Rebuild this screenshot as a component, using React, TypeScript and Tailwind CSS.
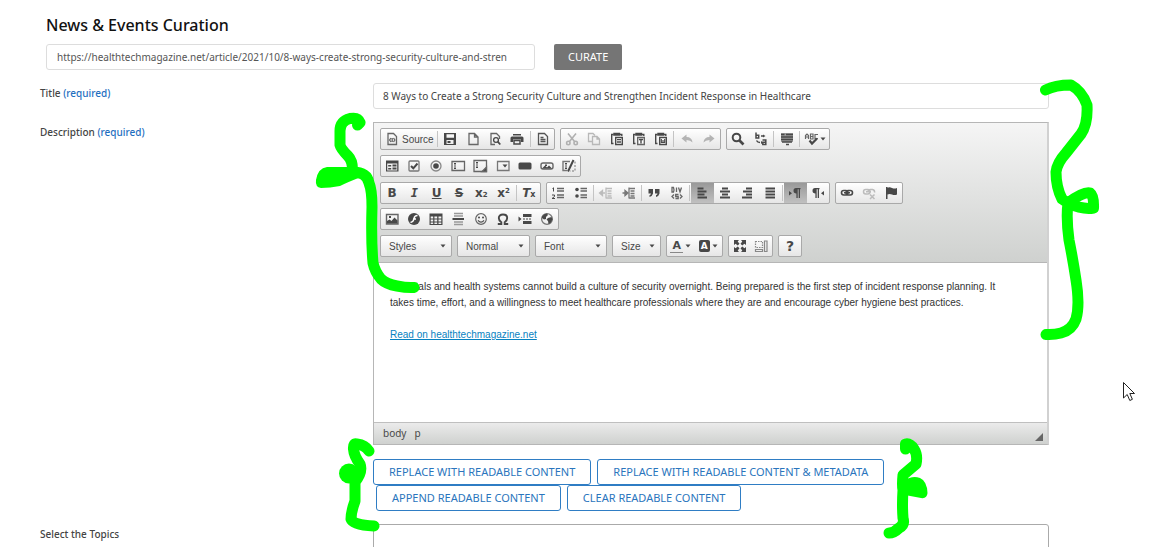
import type { ReactNode } from "react";

const D = "#484848";

const icons: Record<string, ReactNode> = {
  source: (
    <g fill="none" stroke="#666" strokeWidth="1.3">
      <path d="M4 2.5h5.5l3 3v8H4z" />
      <path d="M7 7L5.6 9 7 11M9.5 7l1.4 2-1.4 2M8.2 7v4" />
    </g>
  ),
  save: <path fillRule="evenodd" d="M2 2h12v12H2zM4.500 3.200v3.500h7.500V3.200zM4.500 9v4h7V9zM5.500 10h3v2h-3z" />,
  page: <path d="M4 2.500h5.500l3.500 3.500v7.500H4zM9.500 2.500v3.500H13" fill="none" stroke="#666" strokeWidth="1.300" />,
  preview: (
    <g fill="none" stroke="#666" strokeWidth="1.300">
      <path d="M12.500 8V5.500l-3-3H4v11h4" />
      <circle cx="9" cy="9" r="2.400" stroke={D} />
      <path d="M10.700 10.700l2.600 2.800" stroke={D} strokeWidth="1.800" />
    </g>
  ),
  print: (
    <>
      <path d="M4 3h8v1.500H4zM3 5.500h10q1.500 0 1.500 1.500v4H12V8.500H4V11H1.500V7Q1.500 5.500 3 5.500z" />
      <path d="M5 9.500h6V13H5z" fill="none" stroke={D} strokeWidth="1.500" />
    </>
  ),
  template: (
    <g fill="none" stroke="#555" strokeWidth="1.300">
      <path d="M3.500 2.500H9.500l3 3v8h-9z" />
      <path d="M5.500 6.500h3M5.500 8.500h5M5.500 10.500h5" />
    </g>
  ),
  cut: (
    <g fill="none" stroke="#b0b0b0" strokeWidth="1.600">
      <path d="M4 2.500l6.500 8M12 2.500l-6.500 8" />
      <circle cx="4.300" cy="12" r="1.700" />
      <circle cx="11.700" cy="12" r="1.700" />
    </g>
  ),
  copy: (
    <g fill="none" stroke="#b8b8b8" strokeWidth="1.300">
      <path d="M6.500 10.500h-4v-8H7l2 2" />
      <path d="M6.500 5.500h4.500l2.500 2.500v5.500h-7zM11 5.500v2.500h2.500" />
    </g>
  ),
  paste: (
    <g fill="none" stroke={D} strokeWidth="1.400">
      <path d="M4.500 12.500H2.700v-9h2M11 3.500h1.800V5" />
      <path d="M5 2.500h5.500v1.500H5z" fill={D} />
      <path d="M6.700 6.500h6.600v7H6.700z" fill="#fff" />
      <path d="M8 8.700h4M8 11h4" strokeWidth="1.300" />
    </g>
  ),
  pasteText: (
    <g fill="none" stroke={D} strokeWidth="1.400">
      <path d="M4.500 12.500H2.700v-9h2M11 3.500h1.800V5" />
      <path d="M5 2.500h5.500v1.500H5z" fill={D} />
      <path d="M6.700 6.500h6.600v7H6.700z" fill="#fff" stroke="#666" />
      <path d="M8 8.500h4M10 8.500v4" />
    </g>
  ),
  pasteWord: (
    <g fill="none" stroke={D} strokeWidth="1.400">
      <path d="M4.500 12.500H2.700v-9h2M11 3.500h1.800V5" />
      <path d="M5 2.500h5.500v1.500H5z" fill={D} />
      <path d="M6.700 6.500h6.600v7H6.700z" fill="#fff" />
      <path d="M8.300 8v3.500h3.400V8M10 9v2" strokeWidth="1.200" />
    </g>
  ),
  undo: <path d="M2.500 7.500L7.500 3.500V6q5.500 0 6 5.500Q11.500 9 7.500 9v2.500z" fill="#b4b4b4" />,
  redo: <path d="M13.500 7.500L8.500 3.500V6q-5.500 0-6 5.500Q4.500 9 8.500 9v2.500z" fill="#b4b4b4" />,
  find: (
    <g fill="none" stroke={D}>
      <circle cx="6.500" cy="6.500" r="3.800" strokeWidth="2" />
      <path d="M9.500 9.500l4 4" strokeWidth="2.600" />
    </g>
  ),
  replace: (
    <g fill="none" stroke={D} strokeWidth="1.500">
      <path d="M3 1.500v5.500h2.700V4.200H3M9.500 9h3.300v4.500H9.800v-2.200h3M3.500 9.500q1 2 3.500 2M8 5h3" />
      <path d="M8 9.700v3.600l1.500-1.800zM10 3.500v3l2.500-1.500z" fill={D} stroke="none" />
    </g>
  ),
  selectAll: (
    <g>
      <path d="M2 2h12v9H2z" fill="#999" />
      <path d="M2 3.500h3.500M7 3.500h7M2 6h12M2 8.500h12M3 11h10M7 13.500h3" stroke={D} strokeWidth="1.400" />
    </g>
  ),
  form: <path fillRule="evenodd" d="M2 2.500h12.500v11H2zM3.200 5.500v7h10v-7zM4.200 7h3v1.500h-3zM8.500 6.500h4v2h-4zM4.200 10h3v1.500h-3zM8.500 9.500h4v2h-4z" />,
  checkbox: (
    <g fill="none">
      <rect x="3" y="3" width="10" height="10" rx="1" stroke="#777" strokeWidth="1.300" />
      <path d="M5 8l2.300 2.300L11.500 5.500" stroke={D} strokeWidth="2" />
    </g>
  ),
  radio: (
    <g>
      <circle cx="8" cy="8" r="5" fill="none" stroke="#888" strokeWidth="1.300" />
      <circle cx="8" cy="8" r="2.800" />
    </g>
  ),
  textfield: (
    <g fill="none" stroke="#666" strokeWidth="1.300">
      <path d="M2 3.500h12.500v9H2z" />
      <path d="M4 5.500h2M5 5.500v5M4 10.500h2" stroke={D} strokeWidth="1" />
    </g>
  ),
  textarea: (
    <g fill="none" stroke="#666" strokeWidth="1.300">
      <path d="M2 2.500h12.500v11H2z" />
      <path d="M4 4.500h2M5 4.500v5M4 9.500h2" stroke={D} strokeWidth="1" />
      <path d="M14.500 9v4.500H10z" fill={D} />
    </g>
  ),
  selectField: (
    <g>
      <path d="M2.500 3.500h11.500v9H2.500z" fill="none" stroke="#777" strokeWidth="1.300" />
      <path d="M7.500 6.500h5l-2.500 3z" />
    </g>
  ),
  button: <rect x="1.500" y="4.500" width="13" height="7" rx="1.500" />,
  imageButton: (
    <g>
      <rect x="2" y="5" width="12" height="6" rx="2" fill="none" stroke="#666" strokeWidth="1.400" />
      <path d="M3 10.500l3-3 2 2 2-2 3 3zM6 6.500h2V8H6z" />
    </g>
  ),
  hidden: (
    <g fill="none" stroke={D}>
      <path d="M9 3.500H2v9h4" stroke="#777" strokeWidth="1.400" />
      <path d="M4 5.500h2M5 5.500v5M4 10.500h2" strokeWidth="1" />
      <path d="M12.500 2L7 13.500" strokeWidth="2" />
      <path d="M14 3.500v9.500H9" stroke="#777" strokeDasharray="2 1.500" />
    </g>
  ),
  ol: (
    <g stroke={D} fill="none">
      <path d="M3.500 2.500v4M2.500 3.500h1M2 10h2.500v1.500L2 13.500h3" />
      <path d="M7 3.500h7M7 6h7M7 10h7M7 12.500h7" stroke="#666" strokeWidth="1.400" />
    </g>
  ),
  ul: (
    <g>
      <path d="M7.500 3.500H14M7.500 6H14M7.500 10H14M7.500 12.500H14" stroke="#666" strokeWidth="1.400" />
      <circle cx="4" cy="4.500" r="1.800" />
      <circle cx="4" cy="11" r="1.800" />
    </g>
  ),
  outdent: (
    <g stroke="#bcbcbc" fill="#bcbcbc" strokeWidth="1.300">
      <path d="M8 3.500h6M9.500 6h4M9.500 8.500h4M9.500 11h4M8 13h6M8 2.500v11" />
      <path d="M2 8h5M4.500 5.500L1.500 8l3 2.500z" />
    </g>
  ),
  indent: (
    <g stroke="#777" fill="#777" strokeWidth="1.300">
      <path d="M8 3.500h6M9.500 6h4M9.500 8.500h4M9.500 11h4M8 13h6M8 2.500v11" />
      <path d="M1.500 8h4M4 5.500L7 8l-3 2.500z" />
    </g>
  ),
  quote: <path d="M2.500 4h4.500v4.500Q6.500 11 3.500 12v-1.800Q5 9.500 5 8.500H2.500zM9 4h4.500v4.500Q13 11 10 12v-1.800q1.500-.7 1.500-1.700H9z" />,
  div: (
    <g fill="none" stroke="#666" strokeWidth="1.300">
      <path d="M3 2.500v4.500h1.500q1-2.200 0-4.500zM7.500 2.500V7M9.500 2.500L11 7l1.500-4.500M5 9.500l-2 2 2 2M11 9.500l2 2-2 2M9.500 9.500H6.700v2h2.500v2H6.500" />
    </g>
  ),
  left: <path d="M3.500 3.500h6M3.500 6.500h9M3.500 9.500h7M3.500 12.500h9.500" stroke={D} strokeWidth="2" />,
  center: <path d="M5 3.500h6M3 6.500h10M5 9.500h6M3 12.500h10" stroke={D} strokeWidth="2" />,
  right: <path d="M7 3.500h6M4 6.500h9M7 9.500h6M3 12.500h10" stroke={D} strokeWidth="2" />,
  justify: <path d="M3.500 3.500h9.500M3.500 6.500h9.500M3.500 9.500h9.500M3.500 12.500h9.500" stroke={D} strokeWidth="2" />,
  ltr: <path d="M2 6l3 2.200-3 2.200zM9 3h4.500v1.300H13V13h-1.300V4.300h-1V13H9.400V8.500Q6.500 8.300 6.500 5.700 6.500 3 9 3z" />,
  rtl: <path d="M14 6l-3 2.200 3 2.200zM5 3h4.500v1.300H9V13H7.700V4.300h-1V13H5.400V8.500Q2.500 8.300 2.500 5.700 2.500 3 5 3z" />,
  link: (
    <g fill="none" stroke={D} strokeWidth="1.600">
      <rect x="2.500" y="5.500" width="6.500" height="4.500" rx="2.200" />
      <rect x="7" y="5.500" width="6.500" height="4.500" rx="2.200" />
      <path d="M5 7.800h6" />
    </g>
  ),
  unlink: (
    <g fill="none" stroke="#bcbcbc" strokeWidth="1.500">
      <rect x="2.500" y="4.500" width="6.500" height="4.500" rx="2.200" />
      <path d="M7 7q0-2.500 2.500-2.500h2q2.500.5 2 3M5 6.800h5M9 9.500l4.500 4.500M13.500 9.500L9 14" />
    </g>
  ),
  flag: <path d="M3 2h1.500v.8q2-1 4.500.2 2.500 1 5 0v6.500q-2.500 1-5 0-2.500-1-4.500 0V14H3z" />,
  image: (
    <g>
      <path d="M2.500 3.500h11.500v9.500H2.500z" fill="none" stroke="#666" strokeWidth="1.400" />
      <path d="M3 12.500V10l2.500-1.500L7.500 10l3-3.500 3 3v3zM5 5h2v2H5z" />
    </g>
  ),
  flash: (
    <g>
      <circle cx="8" cy="8" r="6" />
      <path d="M11.500 4.500Q8.500 4.500 8 7.500q-.5 3.500-3.500 4M7 8h3" stroke="#fff" strokeWidth="1.500" fill="none" />
    </g>
  ),
  table: <path fillRule="evenodd" d="M1.500 2.500h13V14h-13zM2.700 5.500v2h2.500v-2zM6.400 5.500v2h2.800v-2zM10.500 5.500v2h2.800v-2zM2.700 8.500v2h2.500v-2zM6.400 8.500v2h2.800v-2zM10.500 8.500v2h2.800v-2zM2.700 11.500V13h2.500v-1.500zM6.400 11.500V13h2.800v-1.500zM10.500 11.500V13h2.800v-1.500z" />,
  hr: (
    <g>
      <path d="M4 2.500h9M4 5h9M4 11h9M4 13.500h9" stroke="#999" strokeWidth="1.600" />
      <path d="M2.500 8h11.500" stroke={D} strokeWidth="1.800" />
    </g>
  ),
  smiley: (
    <g>
      <circle cx="8" cy="8" r="5.300" fill="none" stroke="#666" strokeWidth="1.200" />
      <circle cx="6" cy="6.500" r="1" />
      <circle cx="10" cy="6.500" r="1" />
      <path d="M5 9.300q3 3.500 6 0" fill="none" stroke={D} strokeWidth="1.200" />
    </g>
  ),
  omega: <path d="M2.800 13h3.500v-1.800Q3.800 9.500 3.800 7 3.800 3.500 8 3.500T12.200 7q0 2.500-2.500 4.200V13h3.500" fill="none" stroke={D} strokeWidth="1.900" />,
  pagebreak: (
    <g>
      <path d="M1.500 5.500v5l3-2.500zM6 3h8.500v3H6zM6 10h8.500v3H6z" />
      <path d="M6 8h8.500" stroke={D} strokeDasharray="2 1" />
    </g>
  ),
  globe: (
    <g>
      <circle cx="8" cy="8" r="5.400" fill="none" stroke="#777" strokeWidth="1.300" />
      <path d="M3 5.500Q5 2.500 8 2.500L9 4 7 6v2L5 8.500 3 7zM9 7l3.500-1 1 2.500-2 3.500L9.500 13 9 10 7.500 8.500z" />
    </g>
  ),
  maximize: (
    <path d="M2 2h5L5.700 3.600 7.500 5.700 5.700 7.500 3.600 5.700 2 7zM14 2v5L12.400 5.700 10.300 7.500 8.500 5.700 10.300 3.600 9 2zM2 14V9L3.600 10.300 5.700 8.500 7.500 10.300 5.700 12.400 7 14zM14 14H9L10.300 12.400 8.500 10.300 10.300 8.500 12.400 10.300 14 9z" />
  ),
  blocks: (
    <g fill="none" stroke="#888" strokeWidth="1.200">
      <path d="M2.500 3.500h7v6h-7z" strokeDasharray="1.500 1" />
      <path d="M2.500 11.500h7v2h-7zM11.500 3h2.500v10.500h-2.500z" />
    </g>
  ),
};

const caret = (
  <svg viewBox="0 0 6 4" className="h-1 w-1.5 shrink-0" fill={D} aria-hidden="true">
    <path d="M.5.500h5L3 3.500z" />
  </svg>
);

function Tool({ icon, label, active, children }: { icon?: string; label: string; active?: boolean; children?: ReactNode }) {
  return (
    <button
      type="button"
      aria-label={label}
      className={
        active
          ? "flex h-full min-w-0 flex-1 items-center justify-center bg-linear-to-b from-[#999] to-[#c0c0c0] text-[#484848]"
          : "flex h-full min-w-0 flex-1 items-center justify-center text-[#484848]"
      }
    >
      {icon ? (
        <svg viewBox="0 0 16 16" className="size-4 shrink-0" fill={D} aria-hidden="true">
          {icons[icon]}
        </svg>
      ) : (
        children
      )}
    </button>
  );
}

const Sep = () => <span className="mx-px h-4 w-px shrink-0 bg-[#c4c4c4]" />;

function Group({ className, children }: { className: string; children: ReactNode }) {
  return (
    <div className={`flex h-[22px] shrink-0 items-center overflow-hidden rounded-xs border border-[#a9a9a9] bg-linear-to-b from-white to-[#e6e6e6] ${className}`}>
      {children}
    </div>
  );
}

function Combo({ label, className }: { label: string; className: string }) {
  return (
    <div className={`relative flex h-[22px] items-center rounded-xs border border-[#a9a9a9] bg-linear-to-b from-white to-[#e6e6e6] ${className}`}>
      <select aria-label={label} className="h-full w-full appearance-none bg-transparent pl-2 font-['Liberation_Sans',sans-serif] text-[10px] text-[#474747]">
        <option>{label}</option>
      </select>
      <span className="pointer-events-none absolute right-[5px] flex h-full items-center">{caret}</span>
    </div>
  );
}

function Outline({ children }: { children: ReactNode }) {
  return (
    <button type="button" className="h-[26px] rounded-[3px] border border-[#2f7dc4] bg-white px-[15px] text-[11px] leading-4 whitespace-nowrap text-[#2a75bd]">
      {children}
    </button>
  );
}

function Toolbar() {
  return (
    <div className="flex min-h-[140px] flex-col justify-between border-b border-[#b6b6b6] bg-linear-to-b from-[#f5f5f5] to-[#cfd1cf] px-1.5 py-[5px]">
      <div className="flex gap-[5px]">
        <Group className="w-[175px]">
          <button type="button" className="flex h-full w-[55px] shrink-0 items-center gap-0.5 pl-[3px] font-['Liberation_Sans',sans-serif] text-[10px] text-[#484848]">
            <svg viewBox="0 0 16 16" className="size-4 shrink-0" fill={D} aria-hidden="true">
              {icons.source}
            </svg>
            Source
          </button>
          <Sep />
          <Tool icon="save" label="Save" />
          <Tool icon="page" label="New page" />
          <Tool icon="preview" label="Preview" />
          <Tool icon="print" label="Print" />
          <Sep />
          <Tool icon="template" label="Templates" />
        </Group>
        <Group className="w-[161px]">
          <Tool icon="cut" label="Cut" />
          <Tool icon="copy" label="Copy" />
          <Tool icon="paste" label="Paste" />
          <Tool icon="pasteText" label="Paste as plain text" />
          <Tool icon="pasteWord" label="Paste from Word" />
          <Sep />
          <Tool icon="undo" label="Undo" />
          <Tool icon="redo" label="Redo" />
        </Group>
        <Group className="w-[104px]">
          <Tool icon="find" label="Find" />
          <Tool icon="replace" label="Replace" />
          <Sep />
          <Tool icon="selectAll" label="Select all" />
          <Sep />
          <button type="button" aria-label="Spell check" className="flex h-full w-7 shrink-0 items-center justify-center">
            <svg viewBox="0 0 16 16" className="size-4" fill="none" stroke="#666" aria-hidden="true">
              <path d="M1.500 8V4.500L3 3l1.500 1.500V8M1.500 6h3M6.500 3v5H9V3zM6.500 5.500H9M14 3.500h-3v4h3" strokeWidth="1.200" />
              <path d="M5.500 9.500L8 12.500 13 7.500" stroke={D} strokeWidth="2.200" />
            </svg>
            {caret}
          </button>
        </Group>
      </div>
      <div className="flex gap-[5px]">
        <Group className="w-[201px]">
          <Tool icon="form" label="Form" />
          <Tool icon="checkbox" label="Checkbox" />
          <Tool icon="radio" label="Radio button" />
          <Tool icon="textfield" label="Text field" />
          <Tool icon="textarea" label="Textarea" />
          <Tool icon="selectField" label="Selection field" />
          <Tool icon="button" label="Button" />
          <Tool icon="imageButton" label="Image button" />
          <Tool icon="hidden" label="Hidden field" />
        </Group>
      </div>
      <div className="flex gap-[5px] font-['DejaVu_Sans',sans-serif] text-xs leading-4">
        <Group className="w-[161px]">
          <Tool label="Bold"><b>B</b></Tool>
          <Tool label="Italic"><b className="font-['DejaVu_Sans_Mono',monospace] italic">I</b></Tool>
          <Tool label="Underline"><b className="underline">U</b></Tool>
          <Tool label="Strikethrough"><b className="line-through">S</b></Tool>
          <Tool label="Subscript"><b>x</b><b className="self-end text-[7px]">2</b></Tool>
          <Tool label="Superscript"><b>x</b><b className="self-start text-[7px]">2</b></Tool>
          <Sep />
          <Tool label="Remove format"><b className="italic">T</b><b className="self-end text-[8px]">x</b></Tool>
        </Group>
        <Group className="w-[284px]">
          <Tool icon="ol" label="Numbered list" />
          <Tool icon="ul" label="Bulleted list" />
          <Sep />
          <Tool icon="outdent" label="Decrease indent" />
          <Tool icon="indent" label="Increase indent" />
          <Sep />
          <Tool icon="quote" label="Block quote" />
          <Tool icon="div" label="Div container" />
          <Sep />
          <Tool icon="left" label="Align left" active />
          <Tool icon="center" label="Center" />
          <Tool icon="right" label="Align right" />
          <Tool icon="justify" label="Justify" />
          <Sep />
          <Tool icon="ltr" label="Left to right" active />
          <Tool icon="rtl" label="Right to left" />
        </Group>
        <Group className="w-[68px]">
          <Tool icon="link" label="Link" />
          <Tool icon="unlink" label="Unlink" />
          <Tool icon="flag" label="Anchor" />
        </Group>
      </div>
      <div className="flex gap-[5px]">
        <Group className="w-[179px]">
          <Tool icon="image" label="Image" />
          <Tool icon="flash" label="Flash" />
          <Tool icon="table" label="Table" />
          <Tool icon="hr" label="Horizontal line" />
          <Tool icon="smiley" label="Smiley" />
          <Tool icon="omega" label="Special character" />
          <Tool icon="pagebreak" label="Page break" />
          <Tool icon="globe" label="Embedded frame" />
        </Group>
      </div>
      <div className="flex gap-[5px] font-['DejaVu_Sans',sans-serif]">
        <Combo label="Styles" className="w-[72px]" />
        <Combo label="Normal" className="w-[73px]" />
        <Combo label="Font" className="w-[72px]" />
        <Combo label="Size" className="w-[49px]" />
        <Group className="w-[57px]">
          <Tool label="Text color">
            <b className="mr-0.5 border-b border-[#888] px-0.5 text-[11px] leading-3">A</b>
            {caret}
          </Tool>
          <Tool label="Background color">
            <b className="mr-0.5 rounded-xs bg-[#484848] px-0.5 text-[9px] leading-3 text-white">A</b>
            {caret}
          </Tool>
        </Group>
        <Group className="w-[45px]">
          <Tool icon="maximize" label="Maximize" />
          <Tool icon="blocks" label="Show blocks" />
        </Group>
        <Group className="w-6">
          <Tool label="About"><b className="text-sm leading-4">?</b></Tool>
        </Group>
      </div>
    </div>
  );
}

function Annotations() {
  return (
    <svg className="pointer-events-none absolute top-0 left-0 h-[547px] w-[1150px]" viewBox="0 0 1150 547" fill="none" aria-hidden="true">
      <g stroke="#00ff00" strokeWidth="11" strokeLinecap="round" strokeLinejoin="round">
        <path d="M357.500 125L360 122.500Q358 117 350 118.500 340 121 340 131V145Q341 149 348 156 353 161 352.500 172 367 172 369 183 372 190 372 207 371 240 373 263 375 272 381 279 386 284 397 286 407 288 414 287.500" />
        <path d="M1045.500 90Q1055 85 1071 85 1082 91 1087 105 1088 124 1081 134L1066 153Q1057 163 1056 172 1056 187 1062 199L1068 203Q1084 191 1090 193 1094 196 1093.500 208 1083 210 1068 203 1066 218 1069 240 1073 260 1076 280 1080 305 1076 319 1072 330 1061 333 1054 335 1046 334.500" />
        <path d="M369 451Q365 445 357 444 353 443 353.500 449 354 456 360 464 363 472 355 482V501Q351 512 351 519 353 525 374 526" />
        <path d="M905.500 449V444Q910 443 914 449 918 455 916 464L903 475Q902 485 903 490 902 505 903 518 905 525 899 528 894 533 889 533" />
      </g>
      <g fill="#00ff00">
        <path d="M316 180Q318 168 327 167H355L361 177Q348 182 340 186 330 188 321 188 315 187 316 180z" />
        <circle cx="349" cy="473.500" r="10" />
        <path d="M904 481Q912 475 920 478 927 481 927.500 493 927 499 921 498L905 495z" />
      </g>
      <path d="M1123.500 382.500V398l3.700-3.500 2.600 6 2.600-1.200-2.600-5.800H1134.500z" fill="#fff" stroke="#222" />
    </svg>
  );
}

export default function App() {
  return (
    <main className="relative h-screen overflow-hidden bg-white pt-[15px] pr-[101px] pl-10 font-['Noto_Sans',sans-serif] text-[#444]">
      <h1 className="pl-1.5 text-base leading-5 font-medium text-[#111]">News &amp; Events Curation</h1>
      <form className="mt-[9px] flex gap-[19px] pl-1.5">
        <input
          aria-label="Article URL"
          defaultValue="https://healthtechmagazine.net/article/2021/10/8-ways-create-strong-security-culture-and-stren"
          className="h-[26px] w-[489px] rounded-[3px] border border-[#ddd] px-2.5 text-[10px] text-[#555]"
        />
        <button type="button" className="h-[26px] rounded-xs bg-[#757575] px-3.5 text-[11px] text-white">CURATE</button>
      </form>

      <div className="mt-[13px] grid grid-cols-[333px_minmax(0,1fr)] gap-y-[13px] text-[10px]">
        <label htmlFor="title" className="pt-0.5 leading-4 font-medium">
          Title <span className="text-[#1f6fbf]">(required)</span>
        </label>
        <input
          id="title"
          defaultValue="8 Ways to Create a Strong Security Culture and Strengthen Incident Response in Healthcare"
          className="h-[26px] rounded-[3px] border border-[#ddd] px-[9px] text-[#444]"
        />

        <span className="pt-0.5 leading-4 font-medium">
          Description <span className="text-[#1f6fbf]">(required)</span>
        </span>
        <div>
          <div className="border border-r-2 border-[#b6b6b6] border-r-[#d1d1d1]">
            <Toolbar />
            <div className="min-h-[159px] pt-4 pr-8 pl-4 font-['Liberation_Sans',sans-serif] text-[10px] leading-4 text-[#333]">
              <p>
                Hospitals and health systems cannot build a culture of security overnight. Being prepared is the first step of incident response planning. It takes time, effort, and a willingness to meet healthcare professionals where they are and encourage cyber hygiene best practices.
              </p>
              <p className="mt-4">
                <a href="#article" className="text-[#0782c1] underline">Read on healthtechmagazine.net</a>
              </p>
            </div>
            <div className="flex h-[22px] items-center gap-2 border-t border-[#bfbfbf] bg-linear-to-b from-[#ebebeb] to-[#cfd1cf] pr-1 pl-[9px] text-[#484848]">
              <span>body</span>
              <span>p</span>
              <svg viewBox="0 0 8 8" className="mt-1.5 ml-auto size-2" fill="#666" aria-hidden="true">
                <path d="M8 0v8H0z" />
              </svg>
            </div>
          </div>
          <div className="mt-3.5 flex gap-1.5">
            <Outline>REPLACE WITH READABLE CONTENT</Outline>
            <Outline>REPLACE WITH READABLE CONTENT &amp; METADATA</Outline>
          </div>
          <div className="flex gap-1.5 pl-[3px]">
            <Outline>APPEND READABLE CONTENT</Outline>
            <Outline>CLEAR READABLE CONTENT</Outline>
          </div>
        </div>

        <label htmlFor="topics" className="pt-0.5 leading-4 font-medium">Select the Topics</label>
        <textarea id="topics" className="h-20 resize-none rounded-[3px] border border-[#aaa]" />
      </div>
      <Annotations />
    </main>
  );
}
